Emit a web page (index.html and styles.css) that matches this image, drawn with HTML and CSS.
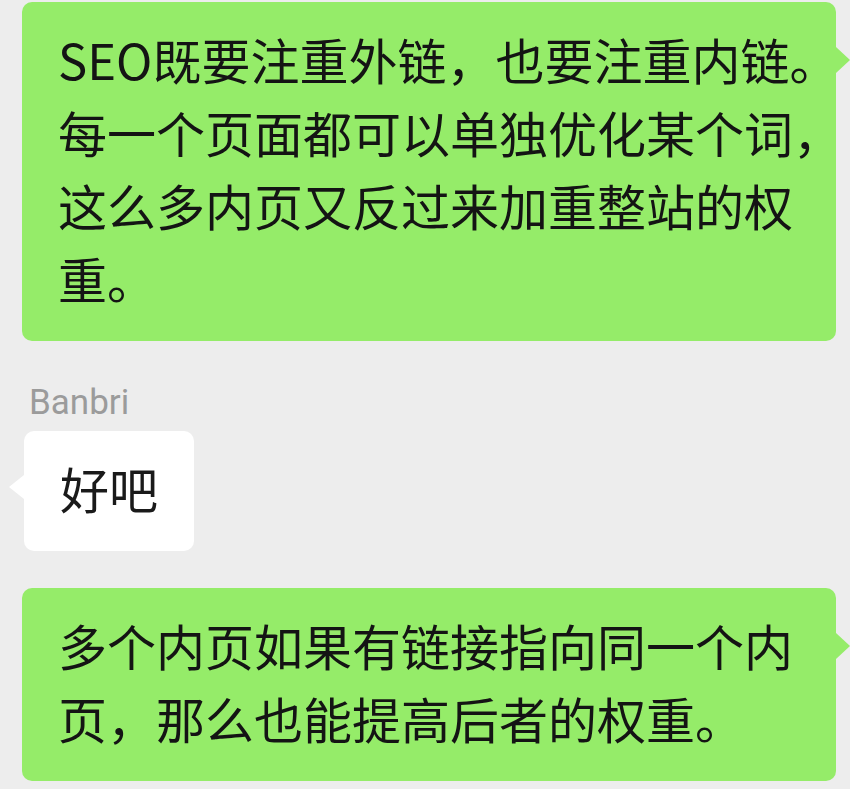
FILE: index.html
```html
<!DOCTYPE html>
<html lang="zh-CN">
<head>
<meta charset="utf-8">
<title>Chat</title>
<link rel="stylesheet" href="styles.css">
</head>
<body>
<div class="chat">
  <div class="row row-me">
    <div class="bubble bubble-me bubble-wide">SEO既要注重外链，也要注重内链。<br>每一个页面都可以单独优化某个词，<br>这么多内页又反过来加重整站的权<br>重。</div>
  </div>
  <div class="row row-other">
    <div class="name">Banbri</div>
    <div class="bubble bubble-other">好吧</div>
  </div>
  <div class="row row-me row-last">
    <div class="bubble bubble-me bubble-wide">多个内页如果有链接指向同一个内<br>页，那么也能提高后者的权重。</div>
  </div>
</div>
</body>
</html>
```

FILE: styles.css
```css
html, body {
  margin: 0;
  padding: 0;
  background: #ededed;
}

body {
  width: 850px;
  height: 789px;
  overflow: hidden;
  font-family: "Noto Sans CJK SC", "Noto Sans", sans-serif;
}

.chat {
  display: flex;
  flex-direction: column;
  padding-top: 2px;
}

.row {
  display: flex;
  flex-direction: column;
}

.row-me {
  align-items: flex-start;
  padding-left: 22px;
}

.row-other {
  align-items: flex-start;
  padding-left: 24px;
  margin-top: 42px;
}

.row-last {
  margin-top: 37px;
}

.name {
  font-family: Roboto, "Noto Sans", sans-serif;
  font-size: 35px;
  line-height: 40px;
  color: #9b9b9b;
  margin-left: 5px;
  margin-bottom: 8px;
}

.bubble {
  position: relative;
  box-sizing: border-box;
  font-size: 49px;
  line-height: 73px;
  color: #141414;
  padding: 20px 36px 27px 36px;
  border-radius: 10px;
  white-space: nowrap;
}

.bubble-wide {
  width: 814px;
}

.bubble-me {
  background: #95ec69;
}

.bubble-me::after {
  content: "";
  position: absolute;
  right: -14px;
  top: 45px;
  width: 0;
  height: 0;
  border-top: 13px solid transparent;
  border-bottom: 13px solid transparent;
  border-left: 14px solid #95ec69;
}

.bubble-other {
  background: #ffffff;
  color: #1a1a1a;
}

.bubble-other::before {
  content: "";
  position: absolute;
  left: -15px;
  top: 44px;
  width: 0;
  height: 0;
  border-top: 12px solid transparent;
  border-bottom: 12px solid transparent;
  border-right: 15px solid #ffffff;
}
```
